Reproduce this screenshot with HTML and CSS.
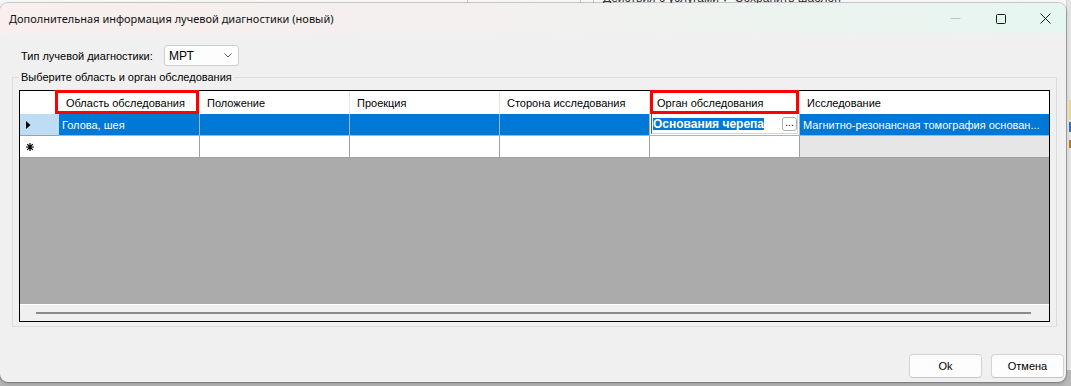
FILE: index.html
```html
<!DOCTYPE html>
<html lang="ru">
<head>
<meta charset="utf-8">
<title>Дополнительная информация лучевой диагностики (новый)</title>
<link rel="stylesheet" href="styles.css">
</head>
<body>
<div class="desktop">
  <div class="backapp">
    <span class="back-line bl1"></span>
    <span class="back-line bl2"></span>
    <span class="back-line bl3"></span>
    <span class="back-text">Действия с услугами ▾&nbsp;&nbsp;Сохранить шаблон</span>
    <div class="back-side">
      <span class="side-mark m1"></span>
      <span class="side-mark m2"></span>
      <span class="side-mark m3"></span>
    </div>
  </div>

  <div class="window">
    <div class="titlebar">
      <span class="title">Дополнительная информация лучевой диагностики (новый)</span>
      <div class="controls">
        <svg class="ctl" width="11" height="11" viewBox="0 0 11 11"><path d="M0.5 5.5H10.5" stroke="#c6c6c6" stroke-width="1"/></svg>
        <svg class="ctl" width="11" height="11" viewBox="0 0 11 11"><rect x="1.5" y="1.5" width="9" height="9" rx="1" fill="none" stroke="#1a1a1a" stroke-width="1"/></svg>
        <svg class="ctl" width="11" height="11" viewBox="0 0 11 11"><path d="M0.5 0.5L10.5 10.5M10.5 0.5L0.5 10.5" stroke="#1a1a1a" stroke-width="1"/></svg>
      </div>
    </div>

    <div class="body">
      <div class="type-row">
        <span class="type-label">Тип лучевой диагностики:</span>
        <div class="combo">
          <span class="combo-value">МРТ</span>
          <svg class="chevron" width="8" height="5" viewBox="0 0 8 5"><path d="M0.5 0.5L4 4L7.5 0.5" fill="none" stroke="#5a5a5a" stroke-width="1"/></svg>
        </div>
      </div>

      <fieldset class="group">
        <legend class="group-title">Выберите область и орган обследования</legend>
        <div class="grid">
          <div class="grow ghead">
            <div class="cell rowhead"></div>
            <div class="cell c1 mark mark-first">Область обследования</div>
            <div class="cell c2">Положение</div>
            <div class="cell c3">Проекция</div>
            <div class="cell c4">Сторона исследования</div>
            <div class="cell c5 mark mark-second">Орган обследования</div>
            <div class="cell c6">Исследование</div>
          </div>
          <div class="grow gsel">
            <div class="cell rowhead">
              <svg width="5" height="8" viewBox="0 0 5 8"><polygon points="0,0 4.5,4 0,8" fill="#000"/></svg>
            </div>
            <div class="cell c1">Голова, шея</div>
            <div class="cell c2"></div>
            <div class="cell c3"></div>
            <div class="cell c4"></div>
            <div class="cell c5 editing">
              <div class="editbox">
                <span class="seltext">Основания черепа</span>
                <span class="ellipsis-btn">...</span>
              </div>
            </div>
            <div class="cell c6">Магнитно-резонансная томография основан...</div>
          </div>
          <div class="grow gnew">
            <div class="cell rowhead">
              <svg width="8" height="8" viewBox="0 0 8 8"><path d="M4 0V8M0 4H8M1.2 1.2L6.8 6.8M6.8 1.2L1.2 6.8" stroke="#000" stroke-width="1.2"/></svg>
            </div>
            <div class="cell c1"></div>
            <div class="cell c2"></div>
            <div class="cell c3"></div>
            <div class="cell c4"></div>
            <div class="cell c5"></div>
            <div class="cell c6 readonly"></div>
          </div>
          <div class="gempty"></div>
          <div class="hscroll"><div class="thumb"></div></div>
        </div>
      </fieldset>

      <div class="buttons">
        <button class="btn" type="button">Ok</button>
        <button class="btn" type="button">Отмена</button>
      </div>
    </div>
  </div>
</div>
</body>
</html>
```

FILE: styles.css
```css
* { box-sizing: border-box; }
html, body { margin: 0; padding: 0; }
body {
  width: 1071px;
  height: 386px;
  overflow: hidden;
  font-family: "Liberation Sans", Arial, sans-serif;
  font-size: 11px;
  color: #000;
}

.desktop {
  position: relative;
  width: 1071px;
  height: 386px;
  background: #b9b9b9;
  overflow: hidden;
}

/* background application peeking behind the dialog */
.backapp {
  position: absolute;
  left: 0;
  top: 0;
  width: 1071px;
  height: 370px;
  background: #f7f7f7;
}
.back-line {
  position: absolute;
  top: 0;
  width: 1px;
  height: 6px;
  background: #c8c8c8;
}
.bl1 { left: 467px; }
.bl2 { left: 580px; }
.bl3 { left: 593px; }
.back-text {
  position: absolute;
  left: 603px;
  top: -9px;
  font-size: 12px;
  color: #333;
  white-space: nowrap;
}
.back-side {
  position: absolute;
  left: 1066px;
  top: 0;
  width: 5px;
  height: 370px;
  background: #e4e4e4;
  border-left: 1px solid #cfcfcf;
}
.side-mark {
  position: absolute;
  left: 2px;
  width: 3px;
}
.m1 { top: 100px; height: 20px; background: #e9d98a; }
.m2 { top: 122px; height: 10px; background: #3a6fb0; }
.m3 { top: 140px; height: 8px; background: #b07a2a; }

/* dialog window */
.window {
  position: absolute;
  left: 0;
  top: 3px;
  width: 1066px;
  height: 379px;
  background: #f0f0f0;
  border-radius: 8px;
  overflow: hidden;
  box-shadow: 0 0 0 1px rgba(0, 0, 0, 0.18), 0 2px 4px rgba(0, 0, 0, 0.2);
  display: flex;
  flex-direction: column;
}

.titlebar {
  height: 30px;
  flex: 0 0 30px;
  display: flex;
  align-items: center;
  padding-left: 9px;
  padding-right: 15px;
  background: linear-gradient(90deg, #f8efee 0%, #f3f0ef 45%, #e6f6f0 100%);
}
.title {
  font-family: "Noto Sans", "Open Sans", sans-serif;
  font-size: 11px;
  color: #111;
  white-space: nowrap;
}
.controls {
  margin-left: auto;
  display: flex;
  align-items: center;
  gap: 34px;
}
.ctl { display: block; }

.body {
  flex: 1;
  display: flex;
  flex-direction: column;
  padding: 12px 9px 4px 12px;
}

.type-row {
  display: flex;
  align-items: center;
  height: 21px;
  padding-left: 9px;
}
.type-label {
  width: 143px;
  white-space: nowrap;
}
.combo {
  width: 75px;
  height: 21px;
  border: 1px solid #cfcfcf;
  border-radius: 3px;
  background: #fdfdfd;
  display: flex;
  align-items: center;
  padding-left: 4px;
  padding-right: 6px;
}
.combo-value { font-size: 12px; }
.chevron { margin-left: auto; display: block; }

/* group box */
.group {
  margin: 5px 0 0 0;
  padding: 0 6px 4px 6px;
  border: 1px solid #dcdcdc;
  min-width: 0;
}
.group-title {
  padding: 0 2px;
  margin-left: 0;
  line-height: 13px;
}

/* data grid */
.grid {
  margin-top: 6px;
  border: 1px solid #000;
  height: 232px;
  display: flex;
  flex-direction: column;
  background: #ababab;
}
.grow {
  display: flex;
  flex: 0 0 auto;
}
.cell {
  height: 100%;
  display: flex;
  align-items: center;
  white-space: nowrap;
  overflow: hidden;
  padding-left: 3px;
}
.rowhead { width: 39px; padding-left: 6px; }
.c1 { width: 141px; }
.c2, .c3, .c4, .c5 { width: 150px; }
.c6 { flex: 1; }

.ghead { height: 23px; background: #fff; }
.ghead .cell { padding-left: 7px; border-right: 1px solid #e5e5e5; overflow: visible; }
.ghead .rowhead { border-right: none; }
.ghead .c6 { border-right: none; }
.mark { position: relative; }
.mark::after {
  content: "";
  position: absolute;
  top: -1px;
  bottom: 0;
  border: 3px solid #ff0000;
}
.mark-first::after { left: -4px; right: 0; }
.mark-second::after { left: 0; right: 0; }

.gsel, .gnew { height: 22px; }
.gsel .cell, .gnew .cell {
  border-right: 1px solid #a0a0a0;
  border-bottom: 1px solid #a0a0a0;
}
.gsel .rowhead, .gnew .rowhead { border-right: none; }
.gsel .c6, .gnew .c6 { border-right: none; }
.gsel { background: #0078d7; color: #fff; }
.gsel .cell { border-color: #9fb8cc; }
.gsel .rowhead { background: #bedcf3; border-bottom-color: #a0a0a0; }
.gnew { background: #fff; }
.gnew .readonly { background: #e6e6e6; }

.editing {
  background: #fff;
  padding-left: 0;
  align-items: stretch;
}
.editbox {
  flex: 1;
  display: flex;
  align-items: center;
  margin: 0 1px 1px 1px;
  border-left: 1px solid #5a5a5a;
  border-bottom: 1px solid #d6d6d6;
  border-right: 1px solid #d6d6d6;
  padding-left: 1px;
}
.seltext {
  background: #0078d7;
  color: #fff;
  font-weight: bold;
  font-size: 12px;
  line-height: 12px;
}
.ellipsis-btn {
  margin-left: auto;
  margin-right: 0;
  width: 15px;
  height: 14px;
  border: 1px solid #adadad;
  border-radius: 3px;
  background: #fff;
  color: #000;
  font-size: 10px;
  line-height: 9px;
  text-align: center;
}

.gempty { flex: 1; background: #ababab; }
.hscroll {
  flex: 0 0 17px;
  background: #f0f0f0;
  border-top: 1px solid #fff;
  padding: 7px 18px 0 16px;
}
.thumb {
  height: 2px;
  background: #8a8a8a;
}

/* buttons */
.buttons {
  margin-top: auto;
  display: flex;
  justify-content: flex-end;
  gap: 9px;
  margin-right: -7px;
}
.btn {
  width: 73px;
  height: 24px;
  font-family: "Liberation Sans", Arial, sans-serif;
  font-size: 11px;
  color: #000;
  background: #fdfdfd;
  border: 1px solid #d3d3d3;
  border-bottom-color: #c4c4c4;
  border-radius: 4px;
  padding: 0;
}
```
